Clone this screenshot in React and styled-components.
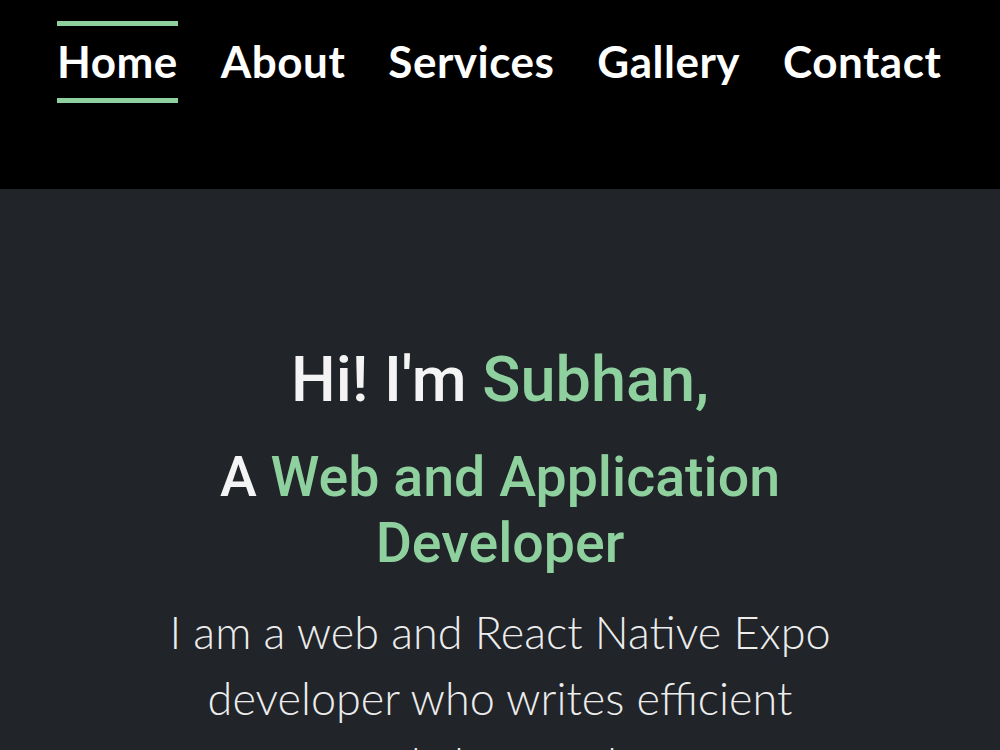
import React from 'react'
import styled, { createGlobalStyle } from 'styled-components'

const GlobalStyle = createGlobalStyle`
  html, body {
    margin: 0;
    padding: 0;
    background: #212429;
    overflow: hidden;
  }
`

const Page = styled.div`
  width: 1000px;
  height: 750px;
  overflow: hidden;
  background: #212429;
`

export const Header = styled.header`
  height: 189px;
  background: #000;
  box-sizing: border-box;
  padding: 21px 0 0 57px;
`

export const Nav = styled.nav`
  display: flex;
  gap: 43px;
`

export const NavLink = styled.a`
  display: block;
  box-sizing: border-box;
  height: 82px;
  padding-top: 10px;
  font-family: Lato, "Noto Sans", sans-serif;
  font-weight: 700;
  font-size: 44px;
  line-height: 50px;
  letter-spacing: 0.5px;
  color: #fff;
  text-decoration: none;
  border-top: 5px solid ${p => (p.$active ? '#8fd19e' : 'transparent')};
  border-bottom: 5px solid ${p => (p.$active ? '#8fd19e' : 'transparent')};
`

export const Hero = styled.section`
  display: flex;
  flex-direction: column;
  align-items: center;
  text-align: center;
  padding-top: 153px;
`

export const Title = styled.h1`
  margin: 0;
  font-family: Roboto, "Noto Sans", sans-serif;
  font-weight: 500;
  font-size: 63px;
  line-height: 76px;
  color: #f4f4f4;
`

export const Subtitle = styled.h2`
  margin: 27px 0 0;
  width: 620px;
  font-family: Roboto, "Noto Sans", sans-serif;
  font-weight: 500;
  font-size: 55.5px;
  line-height: 66px;
  color: #f4f4f4;
`

export const Green = styled.span`
  color: #8fd19e;
`

export const Intro = styled.p`
  margin: 22px 0 0;
  width: 664px;
  font-family: Lato, "Noto Sans", sans-serif;
  font-weight: 300;
  font-size: 45px;
  line-height: 66px;
  color: #ececec;
`

const links = ['Home', 'About', 'Services', 'Gallery', 'Contact']

export default function App() {
  return (
    <>
      <GlobalStyle />
      <Page>
        <Header>
          <Nav>
            {links.map((l, i) => (
              <NavLink key={l} href="#" $active={i === 0}>
                {l}
              </NavLink>
            ))}
          </Nav>
        </Header>
        <Hero>
          <Title>
            Hi! I'm <Green>Subhan,</Green>
          </Title>
          <Subtitle>
            A <Green>Web and Application Developer</Green>
          </Subtitle>
          <Intro>
            I am a web and React Native Expo developer who writes efficient
            and clean code.
          </Intro>
        </Hero>
      </Page>
    </>
  )
}
